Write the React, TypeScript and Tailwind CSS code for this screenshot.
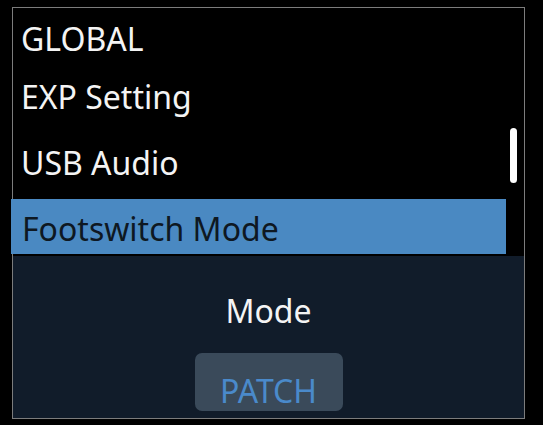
import React from "react";

export default function App() {
  const font = { fontFamily: '"Noto Sans", "Open Sans", sans-serif' };
  return (
    <div className="w-[543px] h-[425px] bg-black overflow-hidden" style={font}>
      <div className="ml-[12px] pt-[7px]">
        <div className="relative w-[513px] h-[412px] border border-[#7c7c7c] bg-black flex flex-col">
          <div className="h-[59px] pt-[11px] pl-[8px] text-[32px] leading-[40px] text-[#f4f4f4]">GLOBAL</div>
          <div className="h-[66px] pt-[10px] pl-[8px] text-[32px] leading-[40px] text-[#f4f4f4]">EXP Setting</div>
          <div className="h-[66px] pt-[10px] pl-[8px] text-[32px] leading-[40px] text-[#f4f4f4]">USB Audio</div>
          <div className="-ml-[2px] w-[495px] h-[55px] pt-[10px] pl-[11px] bg-[#4a89c2] text-[32px] leading-[40px] text-[#0e1822]">
            Footswitch Mode
          </div>
          <div className="mt-[2px] flex-1 bg-[#111c2a] flex flex-col items-center pt-[35px]">
            <div className="text-[32px] leading-[40px] text-[#f4f4f4]">Mode</div>
            <div className="mt-[22px] w-[148px] h-[58px] rounded-[7px] bg-[#3a4a5a] flex justify-center pt-[18px]">
              <span className="text-[32px] leading-[40px] text-[#4a8acb]">PATCH</span>
            </div>
          </div>
          <div className="absolute left-[497px] top-[120px] w-[7px] h-[55px] rounded-full bg-white" />
        </div>
      </div>
    </div>
  );
}
